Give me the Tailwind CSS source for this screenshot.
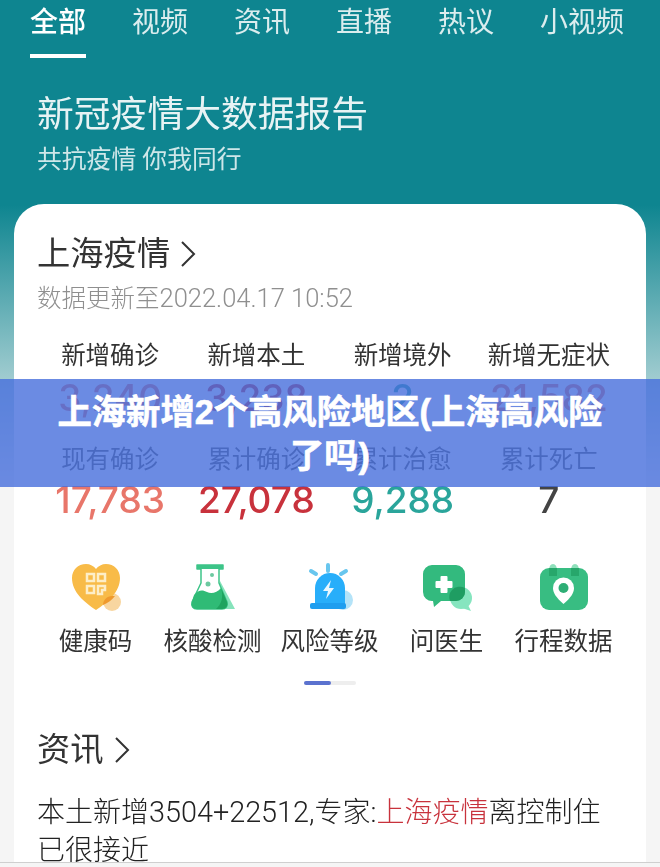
<!DOCTYPE html>
<html lang="zh-CN">
<head>
  <meta charset="UTF-8">
  <meta name="viewport" content="width=device-width, initial-scale=1.0">
  <script src="https://cdn.jsdelivr.net/npm/@tailwindcss/browser@4"></script>
  <title>上海新增2个高风险地区</title>
</head>
<body>
  <div class="relative h-[867px] w-[660px] overflow-hidden bg-[linear-gradient(#0e8590_205px,#f5f5f5_480px)] font-['Roboto','Noto_Sans_CJK_SC',sans-serif]">
    <div class="blur-[0.5px]">

      <!-- tabs -->
      <nav class="flex gap-[46px] pt-px pl-[30px] text-[28px] leading-[44px] text-white/85">
        <div class="font-medium text-white">
          全部
          <div class="mt-[9px] h-[4px] bg-white"></div>
        </div>
        <div>视频</div>
        <div>资讯</div>
        <div>直播</div>
        <div>热议</div>
        <div>小视频</div>
      </nav>

      <!-- header -->
      <div class="pl-[37px] text-white/90">
        <h1 class="mt-[35px] text-[36.800px] leading-[44px]">新冠疫情大数据报告</h1>
        <p class="mt-[8px] text-[24.800px] leading-[30px] text-white/80">共抗疫情 你我同行</p>
      </div>

      <!-- card -->
      <div class="mx-[14px] mt-[29px] h-[658px] overflow-hidden rounded-t-[30px] bg-white pt-[30px] pr-6 pl-[23px] text-[#333]">
        <div class="flex items-center text-[33.300px] leading-[40px]">
          上海疫情
          <svg class="ml-[10px] h-[28px] w-[16px]" viewBox="0 0 16 28" fill="none" stroke="#333" stroke-width="2"><path d="M2 2l12 12L2 26"/></svg>
        </div>
        <p class="mt-[9px] text-[24.500px] leading-[30px] font-light text-[#8f8f8f]">数据更新至<span class="text-[25.500px]">2022.04.17 10:52</span></p>

        <div class="mt-[27px] grid grid-cols-4 text-center text-[24.500px] leading-[30px]">
          <div>新增确诊</div>
          <div>新增本土</div>
          <div>新增境外</div>
          <div>新增无症状</div>
        </div>
        <div class="mt-[6px] grid grid-cols-4 text-center font-['Inter'] text-[37px] leading-[42px] font-medium">
          <div class="text-[#e8766a]">3,240</div>
          <div class="text-[#c8323c]">3,238</div>
          <div class="text-[#2aa59b]">2</div>
          <div class="text-[#e8766a]">21,582</div>
        </div>
        <div class="mt-[26px] grid grid-cols-4 text-center text-[24.500px] leading-[30px] text-[#555]">
          <div>现有确诊</div>
          <div>累计确诊</div>
          <div>累计治愈</div>
          <div>累计死亡</div>
        </div>
        <div class="mt-[4px] grid grid-cols-4 text-center font-['Inter'] text-[37px] leading-[42px] font-medium">
          <div class="text-[#e8766a]">17,783</div>
          <div class="text-[#c8323c]">27,078</div>
          <div class="text-[#2aa59b]">9,288</div>
          <div class="text-[#444]">7</div>
        </div>

        <!-- shortcuts -->
        <div class="mt-[42px] grid grid-cols-5 text-center text-[24.500px] leading-[30px]">
          <div class="flex flex-col items-center gap-[14px]">
            <svg class="h-[50px] w-[50px]" viewBox="0 0 50 50">
              <circle cx="41" cy="39" r="9" fill="#f8d6a0"/>
              <path d="M25 47C13 39 1 29 1 15 1 7 7 1 15 1c4 0 8 2 10 5 2-3 6-5 10-5 8 0 14 6 14 14 0 14-12 24-24 32z" fill="#f8bb48"/>
              <path d="M32 42c0-5 4-9 9-9h3c-3 4-7 7-12 9z" fill="#ef9a2e"/>
              <g fill="none" stroke="#fdeec8" stroke-width="2.500">
                <rect x="16" y="11" width="7" height="7"/><rect x="27" y="11" width="7" height="7"/><rect x="16" y="23" width="7" height="7"/>
                <path d="M27 23h7v4h-3v4h-4z"/>
              </g>
            </svg>
            健康码
          </div>
          <div class="flex flex-col items-center gap-[14px]">
            <svg class="h-[50px] w-[50px]" viewBox="0 0 50 50">
              <path d="M32 18l15 28H28z" fill="#86e3bb"/>
              <path d="M9 2h26v4h-4v14l8 19c1 4-1 7-5 7H9c-4 0-6-3-5-7l9-19V6H9z" fill="#fff" stroke="#3cc488" stroke-width="1.500" stroke-linejoin="round"/>
              <path d="M9 2h26v4H9z" fill="#3cc488"/>
              <path d="M6 32c5-6 9-5 13-3s10 1 14-4l6 14c1 4-1 7-5 7H9c-4 0-6-3-5-7z" fill="#2fbb76"/>
              <path d="M33 25l6 14c1 4-1 7-5 7h-6c5-4 8-12 5-21z" fill="#1fa35f"/>
              <circle cx="20" cy="21" r="2.500" fill="#6cc9a0"/><circle cx="24" cy="12" r="2" fill="#6cc9a0"/>
            </svg>
            核酸检测
          </div>
          <div class="flex flex-col items-center gap-[14px]">
            <svg class="h-[50px] w-[50px]" viewBox="0 0 50 50">
              <path d="M23 2v6M6 8l5 3M41 8l-5 3" stroke="#68c6ee" stroke-width="4" stroke-linecap="round"/>
              <circle cx="38" cy="37" r="10" fill="#b4e3f8"/>
              <path d="M10 41V25a15 15 0 0 1 30 0v16z" fill="#28aefa"/>
              <rect x="5" y="40" width="36" height="6" rx="2" fill="#1f9eef"/>
              <path d="M26 17l-8 11h5l-2 8 8-11h-5z" fill="#eaf7ff"/>
            </svg>
            风险等级
          </div>
          <div class="flex flex-col items-center gap-[14px]">
            <svg class="h-[50px] w-[50px]" viewBox="0 0 50 50">
              <circle cx="39" cy="35" r="11" fill="#86e5bf"/>
              <path d="M45 40l4 8-9-3z" fill="#86e5bf"/>
              <path d="M10 2h24a9 9 0 0 1 9 9v18a9 9 0 0 1-9 9H19l-7 6-1-6a9 9 0 0 1-10-9V11a9 9 0 0 1 9-9z" fill="#33ba7e"/>
              <path d="M30 27a11 11 0 0 1 13-2v4a9 9 0 0 1-9 9h-6a11 11 0 0 1 2-11z" fill="#1f9d62"/>
              <path d="M19.500 14h5v5h5v5h-5v5h-5v-5h-5v-5h5z" fill="#fff" stroke="#fff" stroke-linejoin="round" stroke-width="2"/>
            </svg>
            问医生
          </div>
          <div class="flex flex-col items-center gap-[14px]">
            <svg class="h-[50px] w-[50px]" viewBox="0 0 50 50">
              <path d="M10 8q0-7 4-7t4 7zM32 8q0-7 4-7t4 7z" fill="#8fe0bb"/>
              <rect x="1" y="5" width="48" height="42" rx="9" fill="#38bd82"/>
              <rect x="10" y="5" width="8" height="8" fill="#27a76b"/><rect x="32" y="5" width="8" height="8" fill="#27a76b"/>
              <path d="M24.500 41c-7-6-10.500-11-10.500-16a10.500 10.500 0 0 1 21 0c0 5-3.500 10-10.500 16z" fill="#fff"/>
              <circle cx="24.500" cy="25" r="5" fill="#2eae75"/>
            </svg>
            行程数据
          </div>
        </div>

        <!-- pager -->
        <div class="mt-[24px] flex justify-center">
          <div class="flex h-[4px] w-[52px] rounded-full bg-[#eeeeee]">
            <div class="w-[27px] rounded-full bg-[#5b72cf]"></div>
          </div>
        </div>

        <!-- news -->
        <div class="mt-[45px] flex items-center text-[33.300px] leading-[40px]">
          资讯
          <svg class="ml-[10px] h-[28px] w-[16px]" viewBox="0 0 16 28" fill="none" stroke="#333" stroke-width="2"><path d="M2 2l12 12L2 26"/></svg>
        </div>
        <p class="mt-[23px] text-[28px] leading-[38px] font-light text-[#222]">本土新增<span class="text-[28.800px]">3504+22512,</span>专家:<span class="text-[#c8323c]">上海疫情</span>离控制住已很接近</p>
      </div>

      <div class="h-px bg-[#cfcfcf]"></div>
    </div>

    <!-- title band over the screenshot -->
    <div class="absolute inset-x-0 top-[379px] flex h-[108px] items-center justify-center bg-[#466edc]/80 px-[56px] pt-[2px]">
      <h2 class="text-center font-['Liberation_Sans','Noto_Sans_CJK_SC',sans-serif] text-[34.300px] leading-[44px] font-bold text-white [-webkit-text-stroke:0.6px_white]">上海新增2个高风险地区(上海高风险了吗)</h2>
    </div>
  </div>
</body>
</html>
